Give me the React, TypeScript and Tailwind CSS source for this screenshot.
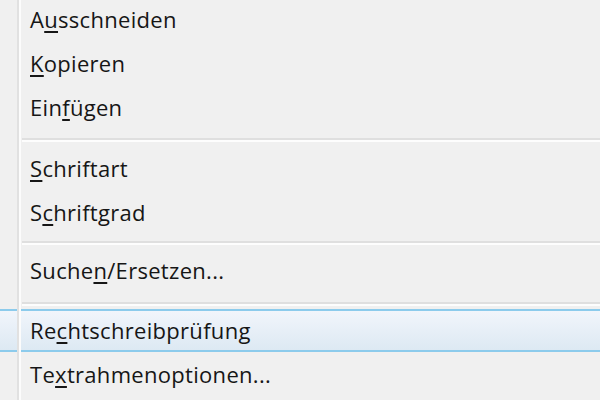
import React from "react";

type Item = { label: string; u: number };

function Label({ label, u }: Item) {
  return (
    <span>
      {label.slice(0, u)}
      <span className="underline decoration-[2px] underline-offset-[3px]">{label[u]}</span>
      {label.slice(u + 1)}
    </span>
  );
}

function Row({ item, active }: { item: Item; active?: boolean }) {
  if (active) {
    return (
      <div className="h-[43px] flex items-center border-y-2 border-[#8ccbec] bg-gradient-to-b from-[#f1f5fb] to-[#dde9f3] pl-[30px]">
        <Label {...item} />
      </div>
    );
  }
  return (
    <div className="h-[44px] flex items-center pl-[30px]">
      <Label {...item} />
    </div>
  );
}

function Separator({ top, bottom }: { top: string; bottom: string }) {
  return (
    <div className={`${top} ${bottom} pl-[22px]`}>
      <div className="h-[2px] bg-[#dfdfdf]" />
      <div className="h-[2px] bg-[#fdfdfd]" />
    </div>
  );
}

export default function App() {
  return (
    <div
      className="relative w-[600px] h-[400px] overflow-hidden bg-[#f0f0f0] text-[22px] tracking-[0.3px] text-[#161616]"
      style={{ fontFamily: '"Open Sans", "Noto Sans", sans-serif' }}
    >
      <div className="-mt-[3px] flex flex-col">
        <Row item={{ label: "Ausschneiden", u: 1 }} />
        <Row item={{ label: "Kopieren", u: 0 }} />
        <Row item={{ label: "Einfügen", u: 3 }} />
        <Separator top="pt-[9px]" bottom="pb-[4px]" />
        <Row item={{ label: "Schriftart", u: 0 }} />
        <Row item={{ label: "Schriftgrad", u: 1 }} />
        <Separator top="pt-[7px]" bottom="pb-[3px]" />
        <Row item={{ label: "Suchen/Ersetzen...", u: 5 }} />
        <Separator top="pt-[10px]" bottom="pb-[3px]" />
        <Row item={{ label: "Rechtschreibprüfung", u: 2 }} active />
        <Row item={{ label: "Textrahmenoptionen...", u: 2 }} />
      </div>
      <div className="absolute top-0 left-[17px] h-full w-[2px] bg-[#e1e1e1]" />
      <div className="absolute top-0 left-[19px] h-full w-[2px] bg-[#fcfcfc]" />
    </div>
  );
}
